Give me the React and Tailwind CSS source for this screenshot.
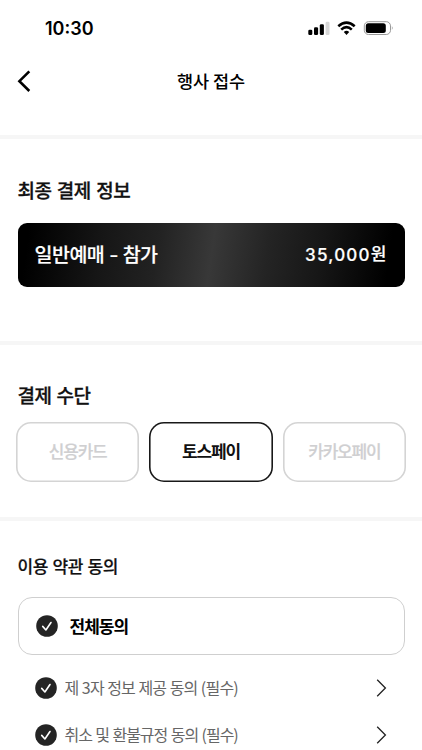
import React from 'react';

function StatusBar() {
  return (
    <div className="flex h-[56px] items-center justify-between pl-[45px] pr-[28px]">
      <span className="pt-[2px] font-['Inter','Liberation_Sans',sans-serif] text-[18px] leading-6 font-semibold text-black">10:30</span>
      <svg width="86" height="16" viewBox="0 0 86 16" className="block">
        <rect x="0.3" y="9.8" width="4" height="5.2" rx="1.3" fill="#000" />
        <rect x="6" y="7.2" width="4.1" height="7.8" rx="1.3" fill="#000" />
        <rect x="11.8" y="4.2" width="4.1" height="10.8" rx="1.3" fill="#000" />
        <rect x="17.6" y="1.7" width="3.9" height="13.3" rx="1.3" fill="#d6d6d6" />
        <g fill="none" stroke="#000" strokeWidth="2.6">
          <path d="M30.3 6.3 Q38.5 -1 46.7 6.3" />
          <path d="M33.2 9.6 Q38.5 4.8 43.8 9.6" />
        </g>
        <path d="M35.8 12 Q38.5 9.7 41.2 12 L38.5 14.9Z" fill="#000" />
        <rect x="56.3" y="1.7" width="26.2" height="12.8" rx="4.2" fill="none" stroke="#999" strokeWidth="1" />
        <rect x="57.8" y="3.3" width="20" height="9.6" rx="2.5" fill="#000" />
        <path d="M83.9 6 Q85.6 8 83.9 10Z" fill="#999" />
      </svg>
    </div>
  );
}

function CheckBadge() {
  return (
    <svg width="22" height="22" viewBox="0 0 22 22" className="block shrink-0">
      <circle cx="11" cy="11" r="10.8" fill="#242424" />
      <path d="M6.7 11.4 L9.9 15 L15 7.5" fill="none" stroke="#fff" strokeWidth="1.6" strokeLinecap="round" strokeLinejoin="round" />
    </svg>
  );
}

function Divider() {
  return <div className="h-1 bg-[#f6f6f6]" />;
}

function PayMethod({ label, selected }) {
  return (
    <button
      className={
        'flex h-[60px] items-center justify-center rounded-[15px] pb-[2px] text-[17px] leading-6 tracking-[-1.2px] ' +
        (selected
          ? 'font-bold text-[#111] shadow-[inset_0_0_0_1.6px_#181818]'
          : 'font-medium text-[#cfcfd1] shadow-[inset_0_0_0_1.6px_#d4d4d4] [-webkit-text-stroke:0.2px_#cfcfd1]')
      }
    >
      {label}
    </button>
  );
}

function TermRow({ label, spacing }) {
  return (
    <div className="flex h-[47.5px] items-center pl-[17px] pr-[17px]">
      <CheckBadge />
      <span className={'ml-[8px] pb-[2px] text-[16px] leading-6 text-[#666] ' + spacing}>{label}</span>
      <svg width="12" height="18" viewBox="0 0 12 18" className="ml-auto block">
        <path d="M1.2 0.8 L9.4 9 L1.2 17.2" fill="none" stroke="#222" strokeWidth="1.3" />
      </svg>
    </div>
  );
}

export default function App() {
  return (
    <div className="h-[750px] w-[422px] overflow-hidden bg-white font-['Noto_Sans_CJK_KR',sans-serif] text-[#111]">
      <StatusBar />
      <header className="grid h-[79px] grid-cols-[1fr_auto_1fr] items-start px-[17px] pt-[13px]">
        <svg width="14" height="24" viewBox="0 0 14 24" className="block">
          <path d="M12.3 2.3 L2.4 12.2 L12.3 22" fill="none" stroke="#000" strokeWidth="2.6" />
        </svg>
        <h1 className="text-[17.5px] leading-6 font-medium tracking-[-0.1px] text-black">행사 접수</h1>
      </header>
      <Divider />

      <section className="h-[202px] px-[17.5px] pt-[37px]">
        <h2 className="text-[19px] leading-7 font-medium tracking-[-0.5px] [word-spacing:1.6px] [-webkit-text-stroke:0.3px_#111]">최종 결제 정보</h2>
        <div className="mt-[19px] flex h-[64px] items-center justify-between rounded-[9px] bg-[linear-gradient(98deg,#000_3%,#161616_22%,#222_36%,#383838_50%,#242424_64%,#161616_78%,#000_95%)] px-[17px] text-white">
          <span className="pb-[2px] text-[19.5px] leading-7 font-medium tracking-[-0.5px] [word-spacing:0.8px] [-webkit-text-stroke:0.2px_#fff]">일반예매 <span className="inline-block w-[9px] origin-center scale-x-125 text-center">-</span> 참가</span>
          <span className="pb-px font-['Inter','Noto_Sans_CJK_KR',sans-serif] text-[17px] leading-7 font-medium tracking-[1.2px] [-webkit-text-stroke:0.2px_#fff]">35,000<span className="relative -top-px">원</span></span>
        </div>
      </section>
      <Divider />

      <section className="h-[172px] px-4 pt-[36px]">
        <h2 className="pl-[1.5px] text-[19px] leading-7 font-medium tracking-[-0.4px] [word-spacing:1px] [-webkit-text-stroke:0.3px_#111]">결제 수단</h2>
        <div className="mt-[13px] grid grid-cols-3 gap-[10px]">
          <PayMethod label="신용카드" />
          <PayMethod label="토스페이" selected />
          <PayMethod label="카카오페이" />
        </div>
      </section>
      <Divider />

      <section className="px-[17.5px] pt-[31px]">
        <h2 className="text-[17px] leading-7 font-medium tracking-[-0.4px] [word-spacing:1.1px] [-webkit-text-stroke:0.2px_#111]">이용 약관 동의</h2>
        <div className="mt-[17px] flex h-[58px] items-center rounded-[14px] border border-[#cfcfcf] pl-[17px]">
          <CheckBadge />
          <span className="ml-[12px] text-[17px] leading-6 font-bold tracking-[-1px] text-black">전체동의</span>
        </div>
        <div className="mt-[9px]">
          <TermRow label="제 3자 정보 제공 동의 (필수)" spacing="tracking-[-0.8px] [word-spacing:0.6px]" />
          <TermRow label="취소 및 환불규정 동의 (필수)" spacing="tracking-[-1px] [word-spacing:0.8px]" />
        </div>
      </section>
    </div>
  );
}
